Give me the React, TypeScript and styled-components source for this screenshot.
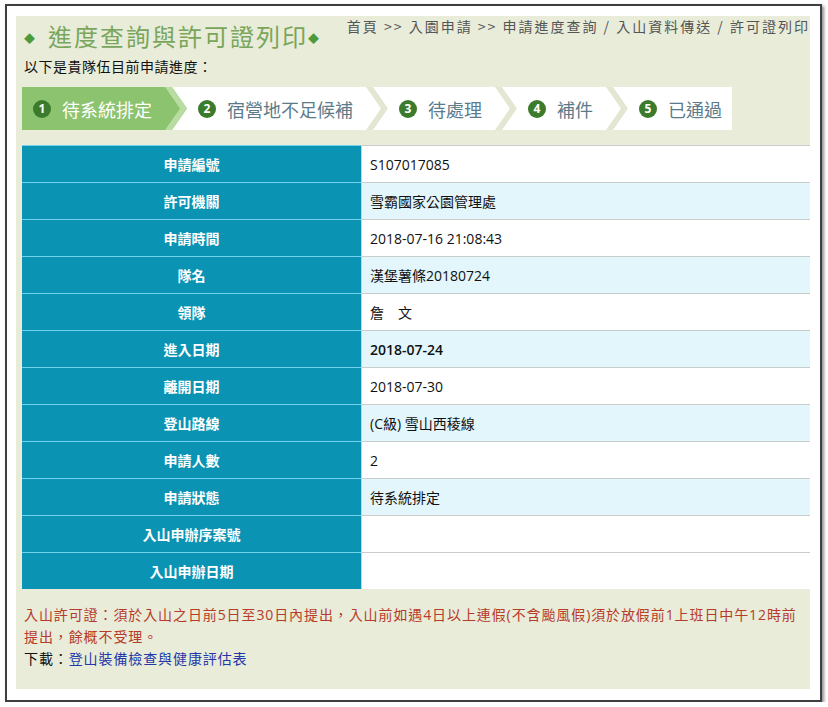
import React from "react";
import styled, { createGlobalStyle } from "styled-components";

const GlobalStyle = createGlobalStyle`
  body {
    margin: 0;
    background: #ffffff;
    font-family: "Open Sans", "Noto Sans CJK TC", sans-serif;
  }
`;

const Frame = styled.div`
  box-sizing: border-box;
  margin: 4px 0 0 5px;
  width: 817px;
  height: 698px;
  border: 2px solid #3f3f3f;
  padding: 10px 10px 11px 9px;
  background: #ffffff;
  box-shadow: 2px 2px 3px rgba(0, 0, 0, 0.45);
`;

const Panel = styled.div`
  height: 100%;
  background: #e8ecd9;
  padding-left: 6px;
  overflow: hidden;
`;

const Header = styled.div`
  display: flex;
  justify-content: space-between;
  align-items: flex-start;
`;

const Title = styled.h1`
  margin: 3px 0 0 2px;
  font-size: 24px;
  line-height: 34px;
  font-weight: 400;
  letter-spacing: 2px;
  color: #79a65b;
  font-family: "Noto Sans CJK TC", sans-serif;
  white-space: nowrap;
`;

const Diamond = styled.span<{ $lead?: boolean }>`
  font-size: 11px;
  color: #4c9a3a;
  vertical-align: 3px;
  letter-spacing: 0;
  margin-right: ${(p) => (p.$lead ? "13px" : "0")};
`;

const Breadcrumb = styled.div`
  font-size: 14px;
  line-height: 20px;
  color: #555555;
  letter-spacing: 2px;
  white-space: nowrap;
  font-family: "Noto Sans CJK TC", sans-serif;
`;

const Intro = styled.p`
  margin: 1px 0 0 2px;
  font-size: 14px;
  line-height: 20px;
  color: #111111;
  letter-spacing: 0.5px;
  font-family: "Noto Sans CJK TC", sans-serif;
`;

const StepBar = styled.div`
  display: inline-flex;
  margin-top: 11px;
  height: 43px;
  background: #ffffff;
`;

const Step = styled.div<{ $active?: boolean; $last?: boolean }>`
  position: relative;
  display: flex;
  align-items: center;
  gap: 11px;
  padding: 0 ${(p) => (p.$last ? "10px" : "35px")} 0 11px;
  font-family: "Noto Sans CJK TC", sans-serif;
  font-size: 18px;
  color: ${(p) => (p.$active ? "#ffffff" : "#5b7b8b")};
  background: ${(p) => (p.$active ? "#8cc36e" : "transparent")};
  clip-path: ${(p) =>
    p.$active
      ? "polygon(0 0, calc(100% - 15px) 0, 100% 50%, calc(100% - 15px) 100%, 0 100%)"
      : "none"};

  &::after {
    content: "";
    display: ${(p) => (p.$last ? "none" : "block")};
    position: absolute;
    right: 0;
    top: 0;
    bottom: 0;
    width: 22px;
    background: ${(p) => (p.$active ? "#b9dca2" : "#e3e7d2")};
    clip-path: polygon(0 0, 7px 0, 100% 50%, 7px 100%, 0 100%, 15px 50%);
  }
`;

const StepNum = styled.span`
  display: inline-flex;
  align-items: center;
  justify-content: center;
  width: 18px;
  height: 18px;
  border-radius: 50%;
  background: #3c7b2c;
  color: #ffffff;
  font-family: "Open Sans", sans-serif;
  font-size: 12px;
  font-weight: 700;
`;

const InfoTable = styled.table`
  margin-top: 15px;
  width: 788px;
  border-collapse: collapse;
  font-size: 14px;
`;

const Label = styled.th`
  width: 339px;
  height: 36px;
  padding: 0;
  background: #0b93b3;
  color: #ffffff;
  font-weight: 700;
  text-align: center;
  font-family: "Noto Sans CJK TC", sans-serif;
  border-top: 1px solid #72d2ec;
  border-right: 1px solid #9fdff0;
`;

const Value = styled.td<{ $shade?: boolean; $bold?: boolean }>`
  height: 36px;
  padding: 0 0 0 8px;
  background: ${(p) => (p.$shade ? "#e2f6fc" : "#ffffff")};
  color: #111111;
  font-weight: ${(p) => (p.$bold ? 600 : 400)};
  border-top: 1px solid #c9cccc;
`;

const Notes = styled.div`
  margin: 15px 0 0 2px;
  font-size: 14px;
  line-height: 22px;
  letter-spacing: 0.9px;
  font-family: "Open Sans", "Noto Sans CJK TC", sans-serif;
`;

const Warning = styled.div`
  color: #b73a2a;
`;

const Download = styled.div`
  color: #111111;
`;

const DownloadLink = styled.a`
  color: #2437a8;
  text-decoration: none;
`;

const steps = ["待系統排定", "宿營地不足候補", "待處理", "補件", "已通過"];
const activeStep = 0;

const rows: { label: string; value: string; shade?: boolean; bold?: boolean }[] = [
  { label: "申請編號", value: "S107017085" },
  { label: "許可機關", value: "雪霸國家公園管理處", shade: true },
  { label: "申請時間", value: "2018-07-16 21:08:43" },
  { label: "隊名", value: "漢堡薯條20180724", shade: true },
  { label: "領隊", value: "詹　文" },
  { label: "進入日期", value: "2018-07-24", shade: true, bold: true },
  { label: "離開日期", value: "2018-07-30" },
  { label: "登山路線", value: "(C級) 雪山西稜線", shade: true },
  { label: "申請人數", value: "2" },
  { label: "申請狀態", value: "待系統排定", shade: true },
  { label: "入山申辦序案號", value: "" },
  { label: "入山申辦日期", value: "" },
];

export default function App() {
  return (
    <>
      <GlobalStyle />
      <Frame>
        <Panel>
          <Header>
            <Title>
              <Diamond $lead>◆</Diamond>
              進度查詢與許可證列印
              <Diamond>◆</Diamond>
            </Title>
            <Breadcrumb>首頁 &gt;&gt; 入園申請 &gt;&gt; 申請進度查詢 / 入山資料傳送 / 許可證列印</Breadcrumb>
          </Header>
          <Intro>以下是貴隊伍目前申請進度：</Intro>
          <StepBar>
            {steps.map((s, i) => (
              <Step key={s} $active={i === activeStep} $last={i === steps.length - 1}>
                <StepNum>{i + 1}</StepNum>
                {s}
              </Step>
            ))}
          </StepBar>
          <InfoTable>
            <tbody>
              {rows.map((r) => (
                <tr key={r.label}>
                  <Label>{r.label}</Label>
                  <Value $shade={r.shade} $bold={r.bold}>
                    {r.value}
                  </Value>
                </tr>
              ))}
            </tbody>
          </InfoTable>
          <Notes>
            <Warning>
              入山許可證：須於入山之日前5日至30日內提出，入山前如遇4日以上連假(不含颱風假)須於放假前1上班日中午12時前提出，餘概不受理。
            </Warning>
            <Download>
              下載：<DownloadLink href="#">登山裝備檢查與健康評估表</DownloadLink>
            </Download>
          </Notes>
        </Panel>
      </Frame>
    </>
  );
}
